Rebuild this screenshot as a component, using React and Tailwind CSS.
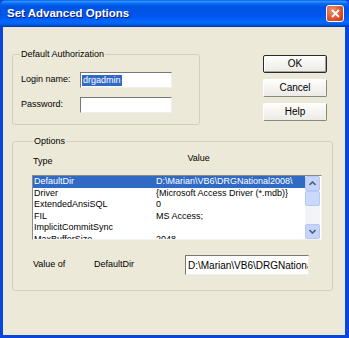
import React from "react";

const ROWS = [
  ["DefaultDir", "D:\\Marian\\VB6\\DRGNational2008\\"],
  ["Driver", "{Microsoft Access Driver (*.mdb)}"],
  ["ExtendedAnsiSQL", "0"],
  ["FIL", "MS Access;"],
  ["ImplicitCommitSync", ""],
  ["MaxBufferSize", "2048"],
];

function Chevron({ up }) {
  return (
    <svg width="7" height="5" viewBox="0 0 7 5">
      <path
        d={up ? "M0.5 4 L3.5 1 L6.5 4" : "M0.5 1 L3.5 4 L6.5 1"}
        fill="none"
        stroke="#4D6185"
        strokeWidth="1.6"
      />
    </svg>
  );
}

function XpButton({ label, primary }) {
  return (
    <button
      className={`h-[18px] w-[64px] rounded-[2px] border bg-[linear-gradient(#fdfdfb,#ecebe6)] text-[10px] leading-none text-black ${
        primary
          ? "border-[#2a2a2a] shadow-[inset_1px_1px_#fff,inset_-1px_-1px_#a5a39a]"
          : "border-t-white border-l-white border-r-[#8a887e] border-b-[#8a887e]"
      }`}
    >
      {label}
    </button>
  );
}

function TextBox({ children, className = "" }) {
  return (
    <div
      className={`flex items-center overflow-hidden whitespace-nowrap bg-white border border-t-[#777] border-l-[#777] border-r-[#eeeeea] border-b-[#eeeeea] ${className}`}
    >
      {children}
    </div>
  );
}

export default function App() {
  return (
    <div
      className="w-[349px] h-[338px] flex flex-col bg-[#0A46DC] text-black"
      style={{ fontFamily: '"Liberation Sans", Arial, sans-serif' }}
    >
      {/* Title bar */}
      <div className="h-[27px] shrink-0 flex items-center justify-between pl-[7px] pr-[5px] rounded-t-[6px] bg-[linear-gradient(#0058EE_0%,#3593FF_5%,#1A80FF_9%,#0262EE_16%,#0054E3_26%,#0055EB_56%,#005BF5_68%,#026AFE_80%,#0062EF_88%,#0052D6_94%,#003092_100%)]">
        <span className="text-white font-bold text-[11.5px] [text-shadow:1px_1px_#0A1883]">
          Set Advanced Options
        </span>
        <div className="w-[18px] h-[17px] rounded-[3px] border border-white bg-[radial-gradient(circle_at_35%_30%,#F0906E,#D9481E_70%,#C2361A)] flex items-center justify-center">
          <svg width="9" height="9" viewBox="0 0 9 9">
            <path d="M1 1 L8 8 M8 1 L1 8" stroke="white" strokeWidth="1.8" />
          </svg>
        </div>
      </div>

      {/* Body */}
      <div className="flex-1 ml-[3px] mr-[4px] mb-[3px] bg-[#ECE9D8] pt-[22px] pl-[9px] text-[9px]">
        <div className="flex">
          <fieldset className="w-[188px] h-[76px] border border-[#D0D0BF] rounded-[3px] pl-[8px]">
            <legend className="px-[1px] leading-[11px] -ml-[1px]">Default Authorization</legend>
            <div className="flex items-center mt-[12px]">
              <span className="w-[59px]">Login name:</span>
              <TextBox className="w-[92px] h-[16px] pl-[1px]">
                <span className="bg-[#316AC5] text-white leading-[11px] px-[1px]">drgadmin</span>
              </TextBox>
            </div>
            <div className="flex items-center mt-[9px]">
              <span className="w-[59px]">Password:</span>
              <TextBox className="w-[92px] h-[16px]" />
            </div>
          </fieldset>

          <div className="ml-[63px] mt-[6px] flex flex-col gap-[6px]">
            <XpButton label="OK" primary />
            <XpButton label="Cancel" />
            <XpButton label="Help" />
          </div>
        </div>

        <fieldset className="mt-[11px] w-[321px] h-[155px] border border-[#D0D0BF] rounded-[3px] pl-[19px]">
          <legend className="px-[1px] leading-[11px] ml-[1px]">Options</legend>

          <div className="flex items-start mt-[6px] h-[12px]">
            <span className="pt-[3px] leading-[11px] pl-[1px]">Type</span>
            <span className="ml-[135px] leading-[11px]">Value</span>
          </div>

          <div className="mt-[10px] w-[290px] h-[65px] flex bg-white border border-t-[#8a8a8a] border-l-[#8a8a8a] border-r-[#f2f2f2] border-b-[#f2f2f2] overflow-hidden">
            <div className="flex-1 overflow-hidden">
              {ROWS.map(([k, v], i) => (
                <div
                  key={k}
                  className={`flex h-[11.5px] leading-[11.5px] whitespace-nowrap ${
                    i === 0 ? "bg-[#316AC5] text-white" : ""
                  }`}
                >
                  <span className="w-[123px] shrink-0 pl-[1px]">{k}</span>
                  <span>{v}</span>
                </div>
              ))}
            </div>
            <div className="w-[15px] shrink-0 flex flex-col bg-[#F3F4F8] mr-[1px]">
              <div className="h-[15px] rounded-[2px] border border-[#B6C8F4] bg-[#C6D4FA] flex items-center justify-center">
                <Chevron up />
              </div>
              <div className="h-[15px] rounded-[2px] border border-[#B6C8F4] bg-[#CAD8FB]" />
              <div className="flex-1" />
              <div className="h-[15px] rounded-[2px] border border-[#B6C8F4] bg-[#C6D4FA] flex items-center justify-center">
                <Chevron />
              </div>
            </div>
          </div>

          <div className="flex items-center mt-[15px]">
            <span className="w-[62px] pl-[1px]">Value of</span>
            <span className="w-[91px]">DefaultDir</span>
            <TextBox className="w-[124px] h-[20px] pl-[2px] text-[10px]">D:\Marian\VB6\DRGNational2008\</TextBox>
          </div>
        </fieldset>
      </div>
    </div>
  );
}
